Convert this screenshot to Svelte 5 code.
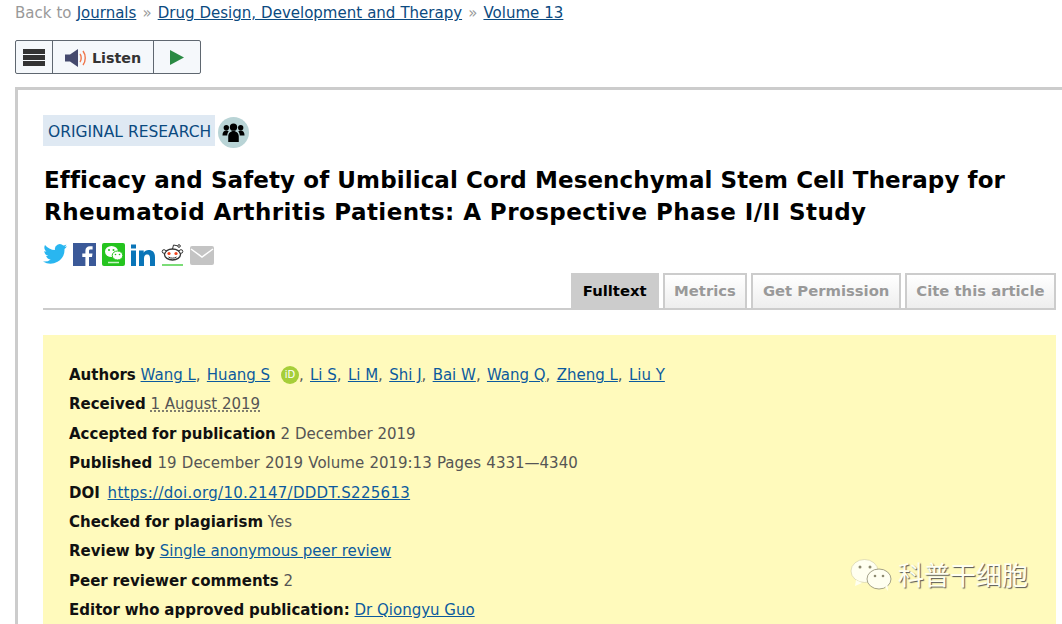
<script>
  const crumbs = ['Drug Design, Development and Therapy', 'Volume 13'];
  const tabs = ['Metrics', 'Get Permission', 'Cite this article'];
  const authors = ['Li S', 'Li M', 'Shi J', 'Bai W', 'Wang Q', 'Zheng L', 'Liu Y'];
</script>

<div class="page">
  <nav class="crumbs">
    Back to <a href="#j">Journals</a>
    {#each crumbs as c}
      <span class="sep">»</span> <a href="#c">{c}</a>{' '}
    {/each}
  </nav>

  <div class="listen">
    <button type="button" class="menu" aria-label="Menu">
      <svg viewBox="0 0 22 17" width="22" height="17">
        <path d="M0 0h22v5H0zM0 6h22v5H0zM0 12h22v5H0z" fill="#333" />
      </svg>
    </button>
    <button type="button" class="speak">
      <svg viewBox="0 0 22 18" width="22" height="18">
        <path d="M0 5.500h5L13 0v18l-8-5.500H0z" fill="#454a6e" />
        <path d="M15 5c1.600 2 1.600 6 0 8" fill="none" stroke="#f0764a" stroke-width="1.400" />
        <path d="M18 2c3 4 3 10 0 14" fill="none" stroke="#f0764a" stroke-width="1.400" />
      </svg>
      Listen
    </button>
    <button type="button" class="play" aria-label="Play">
      <svg viewBox="0 0 14 15" width="14" height="15"><path d="M0 0l14 7.500L0 15z" fill="#2a8a43" /></svg>
    </button>
  </div>

  <article>
    <div class="kind">
      <span class="tag">ORIGINAL RESEARCH</span>
      <span class="peer">
        <svg viewBox="0 0 24 24" width="23" height="23">
          <circle cx="12" cy="6.500" r="3.800" /><circle cx="4.500" cy="7" r="2.800" /><circle cx="19.500" cy="7" r="2.800" />
          <path d="M.5 15c0-3 1.500-5 4-5 1 0 1.800.2 2.500.8-1 1.200-1.500 2.700-1.500 4.200zM23.500 15c0-3-1.500-5-4-5-1 0-1.800.2-2.500.8 1 1.200 1.500 2.700 1.500 4.200zM6.500 22v-6c0-3 2.500-5.500 5.500-5.500s5.500 2.500 5.500 5.500v6z" />
        </svg>
      </span>
    </div>

    <h1>
      <span class="l1">Efficacy and Safety of Umbilical Cord Mesenchymal Stem Cell Therapy for</span>
      <span class="l2">Rheumatoid Arthritis Patients: A Prospective Phase I/II Study</span>
    </h1>

    <div class="share">
      <svg viewBox="0 0 24 24" width="24" height="24">
        <path d="M24 4.300c-.9.400-1.800.7-2.800.8 1-.6 1.800-1.600 2.200-2.700-1 .6-2 1-3.100 1.200A4.900 4.900 0 0 0 12 8.100C8 7.900 4.400 6 2 3 .7 5.200 1.400 8.100 3.500 9.500c-.8 0-1.600-.2-2.200-.6 0 2.300 1.600 4.500 4 5-.7.200-1.500.2-2.200.1.600 2 2.400 3.400 4.600 3.400A9.900 9.900 0 0 1 0 19.500 14 14 0 0 0 21.500 7c1-.7 1.800-1.600 2.500-2.700z" fill="#29b6f0" />
      </svg>
      <svg viewBox="0 0 23 23" width="23" height="23">
        <path d="M0 0h23v23H0z" fill="#3b5998" />
        <path d="M16 23v-9h3l.5-3.500H16V8.200c0-1 .3-1.700 1.700-1.700h1.900V3.300c-.3 0-1.400-.1-2.700-.1-2.700 0-4.500 1.600-4.500 4.600v2.700H9.300V14h3.100v9z" fill="#fff" />
      </svg>
      <svg viewBox="0 0 23 23" width="23" height="23">
        <rect width="23" height="23" rx="2" fill="#25c41f" />
        <ellipse cx="9.500" cy="8.500" rx="6.500" ry="5.500" fill="#fff" />
        <ellipse cx="15.500" cy="12.500" rx="5.300" ry="4.500" fill="#fff" stroke="#25c41f" />
        <circle cx="7" cy="7" r="1" fill="#25c41f" /><circle cx="11.500" cy="7" r="1" fill="#25c41f" />
        <circle cx="13.500" cy="11.500" r=".8" fill="#25c41f" /><circle cx="17.500" cy="11.500" r=".8" fill="#25c41f" />
        <path d="M6 19.500h11" stroke="#c8f5c5" stroke-width="1.500" />
      </svg>
      <svg viewBox="0 0 24 23" width="24" height="23">
        <path d="M0 7.500h5V23H0zM0 1.500h5v4H0zM8 7.500h4.700v2.200c1-1.600 2.700-2.600 4.900-2.600 4.500 0 6.400 2.700 6.400 7.300V23h-5v-7.500c0-2.400-.8-3.900-2.800-3.900-2 0-3.200 1.500-3.200 3.900V23H8z" fill="#0a75b8" />
      </svg>
      <svg viewBox="0 0 23 23" width="23" height="23">
        <ellipse cx="11.500" cy="11.500" rx="8" ry="5.500" fill="#fff" stroke="#333" stroke-width="1.300" />
        <circle cx="3" cy="8.500" r="1.800" fill="#fff" stroke="#333" /><circle cx="20" cy="8.500" r="1.800" fill="#fff" stroke="#333" />
        <circle cx="8" cy="10.500" r="1.600" fill="#f0431c" /><circle cx="15" cy="10.500" r="1.600" fill="#f0431c" />
        <path d="M7.500 14c2 1.500 6 1.500 8 0" fill="none" stroke="#333" />
        <path d="M11.500 6l1-4 4 .8" fill="none" stroke="#333" /><circle cx="18" cy="3" r="1.300" fill="#fff" stroke="#333" />
        <path d="M1 22h21" stroke="#4fd04a" stroke-width="1.500" />
      </svg>
      <svg viewBox="0 0 24 20" width="24" height="20">
        <rect width="24" height="19" rx="2" fill="#c4c4c4" />
        <path d="M1 3l11 8 11-8" fill="none" stroke="#fff" stroke-width="1.500" />
      </svg>
    </div>

    <div class="tabs">
      <span class="tab active">Fulltext</span>
      {#each tabs as t}
        <span class="tab">{t}</span>
      {/each}
    </div>

    <section class="meta">
      <p>
        <b>Authors</b> <a href="#a">Wang L</a><span class="comma">,</span> <a href="#a">Huang S</a>
        <span class="orcid">iD</span><span class="comma">,</span> {#each authors as a, i}<a href="#a">{a}</a>{#if i < authors.length - 1}<span class="comma">,</span>{' '}{/if}{/each}
      </p>
      <p><b>Received</b> <span class="dotted">1 August 2019</span></p>
      <p><b>Accepted for publication</b> 2 December 2019</p>
      <p class="wide"><b>Published</b> 19 December 2019 Volume 2019:13 Pages 4331—4340</p>
      <p><b>DOI</b> <a class="doi" href="#d">https://doi.org/10.2147/DDDT.S225613</a></p>
      <p><b>Checked for plagiarism</b> Yes</p>
      <p><b>Review by</b> <a href="#r">Single anonymous peer review</a></p>
      <p><b>Peer reviewer comments</b> 2</p>
      <p><b>Editor who approved publication:</b> <a href="#e">Dr Qiongyu Guo</a></p>
    </section>
  </article>

  <div class="mark">
    <svg viewBox="0 0 42 34" width="42" height="34">
      <ellipse cx="14.500" cy="13" rx="13.500" ry="11.500" fill="#fffff0" stroke="#cfc9a0" stroke-width=".6" />
      <path d="M6 22l-1 6 7-3z" fill="#fffff0" />
      <ellipse cx="29" cy="21" rx="12" ry="10" fill="#fffff0" stroke="#8d8a70" stroke-width=".8" />
      <path d="M35 29l3 4-.5-6z" fill="#fffff0" />
      <circle cx="10" cy="9" r="1.500" fill="#8d8a70" /><circle cx="20" cy="9" r="1.500" fill="#8d8a70" />
      <circle cx="25" cy="18" r="1.300" fill="#8d8a70" /><circle cx="33" cy="18" r="1.300" fill="#8d8a70" />
    </svg>
    <span>科普干细胞</span>
  </div>
</div>

<style>
  :global(body) { margin: 0; background: #fff; overflow: hidden; }
  .page {
    position: relative; height: 624px; overflow: hidden; padding: 4px 0 0 15px; box-sizing: border-box;
    font-family: "DejaVu Sans", Verdana, sans-serif; font-size: 15px; color: #555;
  }
  a { color: #0c5a9e; }
  .crumbs { color: #999; font-size: 15px; line-height: 18px; word-spacing: .3px; }
  .crumbs a { color: #0b4a80; }
  .sep { color: #999; margin: 0 1px; }

  .listen {
    display: flex; width: 186px; margin-top: 18px; height: 34px; box-sizing: border-box;
    border: 1px solid #5f6770; border-radius: 2px; background: #f5f8fb;
  }
  .listen button {
    display: flex; align-items: center; gap: 5px; height: 100%; padding: 0; border: 0; background: none;
    font: bold 14.300px "DejaVu Sans", sans-serif; color: #333; justify-content: center;
  }
  .listen .menu { width: 36px; }
  .listen .speak { width: 102px; border-left: 1px solid #5f6770; border-right: 1px solid #5f6770; padding-top: 1px; }
  .listen .play { width: 46px; }

  article {
    margin-top: 13px; width: 1100px; border: solid #ccc; border-width: 3px 0 0 3px;
    padding: 25px 0 0 25px; box-sizing: border-box; height: 600px;
  }
  .kind { display: flex; align-items: flex-start; gap: 3px; }
  .tag { background: #dfe9f3; color: #0b4a80; font-size: 15.500px; line-height: 35px; padding: 0 4px 0 5px; height: 31px; box-sizing: border-box; }
  .peer {
    width: 31px; height: 31px; margin-top: 2px; border-radius: 50%; background: #b9d4d6;
    display: flex; align-items: center; justify-content: center;
  }
  h1 { margin: 16px 0 0 1px; font-size: 23px; line-height: 32px; font-weight: bold; color: #000; }
  h1 span { display: block; white-space: nowrap; }
  .l1 { letter-spacing: .09px; }
  .l2 { letter-spacing: .44px; }
  .share { display: flex; align-items: flex-end; gap: 6px; height: 25px; margin-top: 13px; }
  .tabs {
    display: flex; justify-content: flex-end; gap: 4px; width: 1013px; height: 37px; margin-top: 7px;
    box-sizing: border-box; border-bottom: 2px solid #ccc;
  }
  .tab {
    box-sizing: border-box; padding: 0 9.500px; line-height: 32px; font-weight: bold; font-size: 14.800px; color: #999;
    border: solid #ccc; border-width: 2px 2px 0; background: linear-gradient(#fff, #eee); height: 35px;
  }
  .tab.active { background: #ccc; color: #000; padding: 0 10px; }
  .meta {
    width: 1013px; margin-top: 25px; padding: 26px 26px; box-sizing: border-box; background: #fffabc; height: 300px;
  }
  .meta p { margin: 0; line-height: 29.400px; }
  .meta b { color: #111; word-spacing: -.5px; }
  .wide { word-spacing: .5px; }
  .comma { margin-right: 1.500px; }
  .doi { letter-spacing: .3px; margin-left: 3px; }
  .orcid {
    display: inline-block; width: 18px; height: 18px; border-radius: 50%; background: #a6ce39; color: #fff;
    font-size: 10px; line-height: 18px; text-align: center; margin-left: 6px; vertical-align: 2px;
  }
  .dotted { text-decoration: underline dotted #555; text-underline-offset: 1px; }
  .mark {
    position: absolute; left: 850px; top: 558px; display: flex; align-items: center; gap: 6px;
    font: 26px "Noto Sans CJK SC", sans-serif; color: #fffff0; text-shadow: 1px 1px 1px #555;
  }
  .mark span { margin-top: -3px; }
</style>
